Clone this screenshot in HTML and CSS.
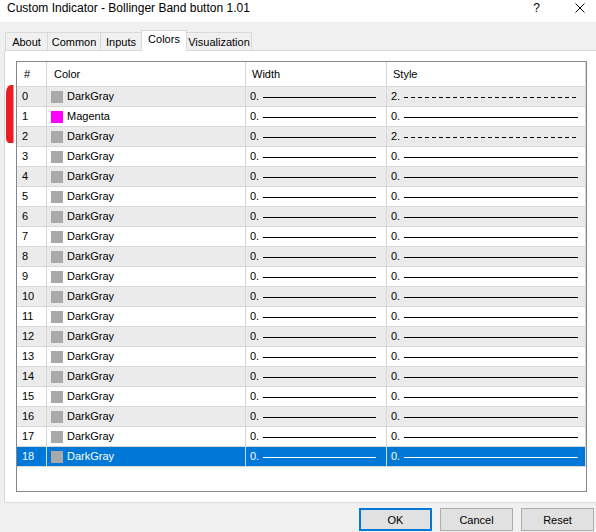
FILE: index.html
```html
<!DOCTYPE html>
<html lang="en">
<head>
<meta charset="utf-8">
<title>Custom Indicator - Bollinger Band button 1.01</title>
<link rel="stylesheet" href="styles.css">
</head>
<body>
<div class="window">
  <header class="titlebar">
    <span class="title">Custom Indicator - Bollinger Band button 1.01</span>
    <span class="help">?</span>
    <svg class="close" width="10" height="10" viewBox="0 0 10 10"><path d="M0.5 0.5 L9.5 9.5 M9.5 0.5 L0.5 9.5" stroke="#000" stroke-width="1" fill="none"/></svg>
  </header>

  <nav class="tabs">
    <div class="tab tab-about">About</div>
    <div class="tab tab-common">Common</div>
    <div class="tab tab-inputs">Inputs</div>
    <div class="tab tab-colors active">Colors</div>
    <div class="tab tab-vis">Visualization</div>
  </nav>

  <section class="panel">
    <div class="grid">
      <div class="grid-row head">
        <div class="cell num">#</div>
        <div class="cell color">Color</div>
        <div class="cell width">Width</div>
        <div class="cell style">Style</div>
      </div>

      <div class="grid-row even">
        <div class="cell num">0</div>
        <div class="cell color"><span class="swatch gray"></span>DarkGray</div>
        <div class="cell width"><span class="val">0.</span><span class="line short"></span></div>
        <div class="cell style"><span class="val">2.</span><span class="line long dash"></span></div>
      </div>
      <div class="grid-row">
        <div class="cell num">1</div>
        <div class="cell color"><span class="swatch magenta"></span>Magenta</div>
        <div class="cell width"><span class="val">0.</span><span class="line short"></span></div>
        <div class="cell style"><span class="val">0.</span><span class="line long"></span></div>
      </div>
      <div class="grid-row even">
        <div class="cell num">2</div>
        <div class="cell color"><span class="swatch gray"></span>DarkGray</div>
        <div class="cell width"><span class="val">0.</span><span class="line short"></span></div>
        <div class="cell style"><span class="val">2.</span><span class="line long dash"></span></div>
      </div>
      <div class="grid-row">
        <div class="cell num">3</div>
        <div class="cell color"><span class="swatch gray"></span>DarkGray</div>
        <div class="cell width"><span class="val">0.</span><span class="line short"></span></div>
        <div class="cell style"><span class="val">0.</span><span class="line long"></span></div>
      </div>
      <div class="grid-row even">
        <div class="cell num">4</div>
        <div class="cell color"><span class="swatch gray"></span>DarkGray</div>
        <div class="cell width"><span class="val">0.</span><span class="line short"></span></div>
        <div class="cell style"><span class="val">0.</span><span class="line long"></span></div>
      </div>
      <div class="grid-row">
        <div class="cell num">5</div>
        <div class="cell color"><span class="swatch gray"></span>DarkGray</div>
        <div class="cell width"><span class="val">0.</span><span class="line short"></span></div>
        <div class="cell style"><span class="val">0.</span><span class="line long"></span></div>
      </div>
      <div class="grid-row even">
        <div class="cell num">6</div>
        <div class="cell color"><span class="swatch gray"></span>DarkGray</div>
        <div class="cell width"><span class="val">0.</span><span class="line short"></span></div>
        <div class="cell style"><span class="val">0.</span><span class="line long"></span></div>
      </div>
      <div class="grid-row">
        <div class="cell num">7</div>
        <div class="cell color"><span class="swatch gray"></span>DarkGray</div>
        <div class="cell width"><span class="val">0.</span><span class="line short"></span></div>
        <div class="cell style"><span class="val">0.</span><span class="line long"></span></div>
      </div>
      <div class="grid-row even">
        <div class="cell num">8</div>
        <div class="cell color"><span class="swatch gray"></span>DarkGray</div>
        <div class="cell width"><span class="val">0.</span><span class="line short"></span></div>
        <div class="cell style"><span class="val">0.</span><span class="line long"></span></div>
      </div>
      <div class="grid-row">
        <div class="cell num">9</div>
        <div class="cell color"><span class="swatch gray"></span>DarkGray</div>
        <div class="cell width"><span class="val">0.</span><span class="line short"></span></div>
        <div class="cell style"><span class="val">0.</span><span class="line long"></span></div>
      </div>
      <div class="grid-row even">
        <div class="cell num">10</div>
        <div class="cell color"><span class="swatch gray"></span>DarkGray</div>
        <div class="cell width"><span class="val">0.</span><span class="line short"></span></div>
        <div class="cell style"><span class="val">0.</span><span class="line long"></span></div>
      </div>
      <div class="grid-row">
        <div class="cell num">11</div>
        <div class="cell color"><span class="swatch gray"></span>DarkGray</div>
        <div class="cell width"><span class="val">0.</span><span class="line short"></span></div>
        <div class="cell style"><span class="val">0.</span><span class="line long"></span></div>
      </div>
      <div class="grid-row even">
        <div class="cell num">12</div>
        <div class="cell color"><span class="swatch gray"></span>DarkGray</div>
        <div class="cell width"><span class="val">0.</span><span class="line short"></span></div>
        <div class="cell style"><span class="val">0.</span><span class="line long"></span></div>
      </div>
      <div class="grid-row">
        <div class="cell num">13</div>
        <div class="cell color"><span class="swatch gray"></span>DarkGray</div>
        <div class="cell width"><span class="val">0.</span><span class="line short"></span></div>
        <div class="cell style"><span class="val">0.</span><span class="line long"></span></div>
      </div>
      <div class="grid-row even">
        <div class="cell num">14</div>
        <div class="cell color"><span class="swatch gray"></span>DarkGray</div>
        <div class="cell width"><span class="val">0.</span><span class="line short"></span></div>
        <div class="cell style"><span class="val">0.</span><span class="line long"></span></div>
      </div>
      <div class="grid-row">
        <div class="cell num">15</div>
        <div class="cell color"><span class="swatch gray"></span>DarkGray</div>
        <div class="cell width"><span class="val">0.</span><span class="line short"></span></div>
        <div class="cell style"><span class="val">0.</span><span class="line long"></span></div>
      </div>
      <div class="grid-row even">
        <div class="cell num">16</div>
        <div class="cell color"><span class="swatch gray"></span>DarkGray</div>
        <div class="cell width"><span class="val">0.</span><span class="line short"></span></div>
        <div class="cell style"><span class="val">0.</span><span class="line long"></span></div>
      </div>
      <div class="grid-row">
        <div class="cell num">17</div>
        <div class="cell color"><span class="swatch gray"></span>DarkGray</div>
        <div class="cell width"><span class="val">0.</span><span class="line short"></span></div>
        <div class="cell style"><span class="val">0.</span><span class="line long"></span></div>
      </div>
      <div class="grid-row selected">
        <div class="cell num">18</div>
        <div class="cell color"><span class="swatch gray"></span>DarkGray</div>
        <div class="cell width"><span class="val">0.</span><span class="line short"></span></div>
        <div class="cell style"><span class="val">0.</span><span class="line long"></span></div>
      </div>
    </div>
  </section>

  <footer class="buttons">
    <button class="btn default">OK</button>
    <button class="btn">Cancel</button>
    <button class="btn">Reset</button>
  </footer>

  <!-- red highlighter stroke beside the first rows -->
  <svg class="marker" width="16" height="60" viewBox="0 0 16 60">
    <path d="M13.5 0 L10 0 Q6 2 6 9 L6 52 Q6 57 8.5 58 L13.5 58 Z" fill="#ec1c24"/>
  </svg>
</div>
</body>
</html>
```

FILE: styles.css
```css
* {
  box-sizing: border-box;
}

html, body {
  margin: 0;
  padding: 0;
}

body {
  width: 596px;
  height: 532px;
  overflow: hidden;
  background: #f0f0f0;
  font-family: "Liberation Sans", Arial, sans-serif;
  font-size: 11px;
  color: #000;
}

.window {
  position: relative;
  width: 596px;
  height: 532px;
}

/* ---------- title bar ---------- */
.titlebar {
  display: flex;
  align-items: flex-start;
  height: 22px;
  background: #fff;
}

.title {
  padding-left: 7px;
  font-size: 12px;
  line-height: 16px;
}

.help {
  margin-left: auto;
  margin-right: 35px;
  font-size: 12px;
  line-height: 16px;
}

.close {
  margin-top: 3px;
  margin-right: 11px;
}

/* ---------- tab strip ---------- */
.tabs {
  display: flex;
  align-items: flex-end;
  height: 28px;
  padding-left: 5px;
}

.tab {
  height: 18px;
  border: 1px solid #d9d9d9;
  border-bottom: none;
  padding-top: 1px;
  line-height: 16px;
  text-align: center;
  white-space: nowrap;
  background: #f0f0f0;
}

.tab + .tab {
  margin-left: -1px;
}

.tab-about { width: 43px; }
.tab-common { width: 54px; }
.tab-inputs { width: 42px; }
.tab-colors { width: 46px; }
.tab-vis { width: 66px; }

.tab.active {
  position: relative;
  z-index: 1;
  height: 21px;
  margin-bottom: -1px;
  padding-top: 0;
  background: #fff;
}

/* ---------- tab page ---------- */
.panel {
  margin-left: 4px;
  height: 453px;
  border: 1px solid #d9d9d9;
  border-right: none;
  background: #fff;
  padding: 10px 0 0 11px;
}

.grid {
  width: 571px;
  height: 431px;
  border: 1px solid #828790;
  background: #fff;
}

.grid-row {
  display: grid;
  grid-template-columns: 30px 199px 141px 199px;
  height: 20px;
  border-bottom: 1px solid #d6d6d6;
}

.grid-row.head {
  height: 25px;
}

.grid-row.even {
  background: #ebebeb;
}

.grid-row.selected {
  background: #0078d7;
  color: #fff;
}

.cell {
  display: flex;
  align-items: center;
  padding-bottom: 1px;
  border-right: 1px solid #d6d6d6;
  white-space: nowrap;
  overflow: hidden;
}

.grid-row.selected .cell {
  border-right-color: #d9d9d9;
}

.cell.num { padding-left: 5px; }
.cell.color { padding-left: 4px; }
.cell.width { padding-left: 4px; }
.cell.style { padding-left: 4px; }

.head .cell.num { padding-left: 7px; }
.head .cell.color { padding-left: 7px; }
.head .cell.width { padding-left: 6px; }
.head .cell.style { padding-left: 6px; }

.swatch {
  width: 12px;
  height: 12px;
  margin-top: 1px;
  margin-right: 4px;
  flex: none;
}

.swatch.gray { background: #a9a9a9; }
.swatch.magenta { background: #ff00ff; }

.val {
  width: 13px;
  flex: none;
}

.line {
  height: 1px;
  margin-top: 2px;
  flex: none;
  background: #000;
}

.line.short { width: 113px; }
.line.long { width: 174px; }

.line.dash {
  width: 172px;
  background: repeating-linear-gradient(90deg, #000 0 4px, transparent 4px 7px);
}

.grid-row.selected .line {
  background: #fff;
}

/* ---------- dialog buttons ---------- */
.buttons {
  display: flex;
  justify-content: flex-end;
  gap: 8px;
  margin-top: 5px;
  padding-right: 2px;
}

.btn {
  width: 73px;
  height: 23px;
  padding: 0;
  border: 1px solid #adadad;
  background: #e1e1e1;
  font-family: "Liberation Sans", Arial, sans-serif;
  font-size: 11px;
  color: #000;
}

.btn.default {
  border-color: #0078d7;
  box-shadow: inset 0 0 0 1px #0078d7;
}

/* ---------- annotation ---------- */
.marker {
  position: absolute;
  left: 0;
  top: 85px;
}
```
